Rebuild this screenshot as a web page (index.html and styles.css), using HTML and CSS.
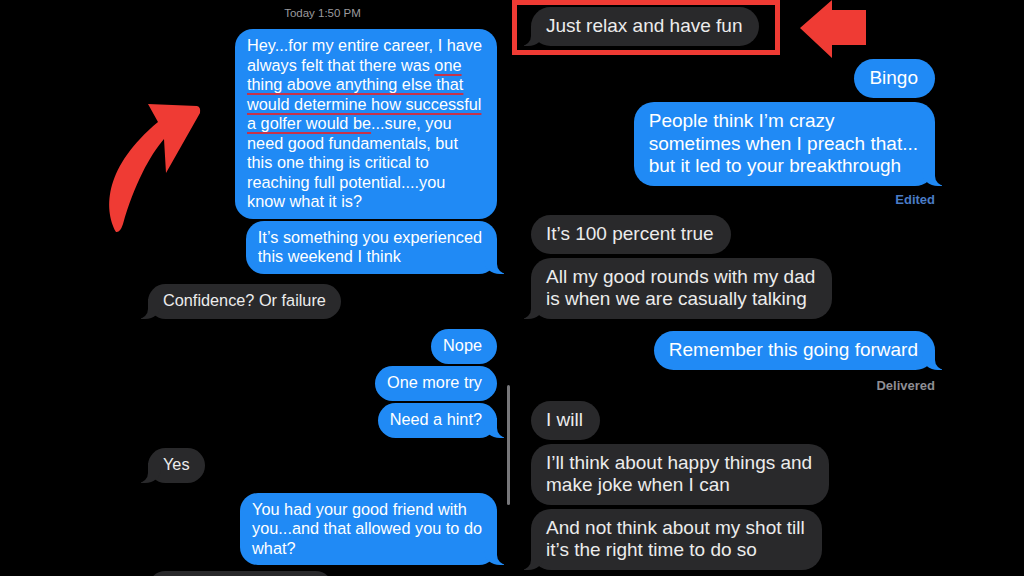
FILE: index.html
```html
<!DOCTYPE HTML>
<html lang="en">
<head>
    <meta charset="UTF-8">
    <meta name="viewport" content="width=device-width, initial-scale=1.0">
    <title>Messages</title>
    <link rel="stylesheet" href="styles.css">
</head>
<body>

    <div class="chat">
        <div class="col col-left">
            <div class="stamp">Today 1:50 PM</div>
            <div class="bubble sent">Hey...for my entire career, I have<br>always felt that there was <span class="mark">one</span><br><span class="mark">thing above anything else that</span><br><span class="mark">would determine how successful</span><br><span class="mark">a golfer would be</span>...sure, you<br>need good fundamentals, but<br>this one thing is critical to<br>reaching full potential....you<br>know what it is?</div>
            <div class="bubble sent tail close">It’s something you experienced<br>this weekend I think</div>
            <div class="bubble received tail apart">Confidence? Or failure</div>
            <div class="bubble sent apart">Nope</div>
            <div class="bubble sent close">One more try</div>
            <div class="bubble sent tail close">Need a hint?</div>
            <div class="bubble received tail apart">Yes</div>
            <div class="bubble sent tail apart">You had your good friend with<br>you...and that allowed you to do<br>what?</div>
            <div class="bubble received cut"></div>
        </div>

        <div class="scrollbar"></div>

        <div class="col col-right">
            <div class="top-row">
                <div class="highlight">
                    <div class="bubble received tail">Just relax and have fun</div>
                </div>
                <svg class="arrow-left" width="66" height="58" viewBox="0 0 66 58">
                    <polygon points="0,28 32,0 32,10 66,10 66,45 32,45 32,58" fill="#ef3b34"/>
                </svg>
            </div>
            <div class="bubble sent close">Bingo</div>
            <div class="bubble sent tail close">People think I’m crazy<br>sometimes when I preach that...<br>but it led to your breakthrough</div>
            <div class="status edited">Edited</div>
            <div class="bubble received after-status">It’s 100 percent true</div>
            <div class="bubble received tail close">All my good rounds with my dad<br>is when we are casually talking</div>
            <div class="bubble sent tail apart">Remember this going forward</div>
            <div class="status delivered">Delivered</div>
            <div class="bubble received after-status">I will</div>
            <div class="bubble received close">I’ll think about happy things and<br>make joke when I can</div>
            <div class="bubble received tail close">And not think about my shot till<br>it’s the right time to do so</div>
        </div>
    </div>

    <!-- curved arrow pointing at the first message -->
    <svg class="arrow-curve" width="105" height="135" viewBox="0 0 105 135">
        <path d="M16,132 C3,108 5,66 58,22 L48,4 L97,6 Q101,7 100,13 L66,73 L64,39 C50,55 34,85 23,124 Q20,133 16,132 Z" fill="#ef3b34"/>
    </svg>

</body>
</html>
```

FILE: styles.css
```css
body {
    margin: 0;
    height: 576px;
    overflow: hidden;
    position: relative;
    background-color: #000;
    color: #fff;
    font-family: "Liberation Sans", Arial, sans-serif;
}
.chat {
    display: flex;
    align-items: flex-start;
    padding-left: 148px;
}
.col {
    display: flex;
    flex-direction: column;
}
.col-left {
    width: 349px;
    font-size: 16.3px;
    line-height: 19.5px;
}
.col-right {
    width: 404px;
    font-size: 19px;
    line-height: 22.5px;
}
.stamp {
    align-self: center;
    padding: 6px 0 9px;
    font-size: 11.5px;
    line-height: 14px;
    color: #9a9a9e;
}
.scrollbar {
    flex: none;
    width: 3px;
    height: 120px;
    margin: 385px 21px 0 10px;
    background-color: #77777a;
    border-radius: 2px;
}

/* bubbles */
.bubble {
    position: relative;
    box-sizing: border-box;
    border-radius: 18px;
    white-space: nowrap;
}
.col-left .bubble {
    padding: 7px 15px 7px 12px;
    min-height: 35px;
}
.col-right .bubble {
    padding: 8px 17px 8px 15px;
    min-height: 39px;
    border-radius: 20px;
}
.col-left .received {
    padding-left: 15px;
}
.sent {
    align-self: flex-end;
    background-color: #208af5;
}
.received {
    align-self: flex-start;
    background-color: #29292b;
    color: #ececec;
}
.col-left .close { margin-top: 2px; }
.col-left .apart { margin-top: 10px; }
.col-right .close { margin-top: 4px; }
.col-right .apart { margin-top: 12px; }
.after-status { margin-top: 7px; }
.col-left .cut {
    width: 185px;
    margin-top: 6px;
}

/* tails */
.tail::before,
.tail::after {
    content: "";
    position: absolute;
    bottom: 0;
    height: 20px;
}
.sent.tail::before {
    right: -7px;
    width: 20px;
    background-color: #208af5;
    border-bottom-left-radius: 16px 14px;
}
.sent.tail::after {
    right: -10px;
    width: 10px;
    background-color: #000;
    border-bottom-left-radius: 10px;
}
.received.tail::before {
    left: -7px;
    width: 20px;
    background-color: #29292b;
    border-bottom-right-radius: 16px 14px;
}
.received.tail::after {
    left: -10px;
    width: 10px;
    background-color: #000;
    border-bottom-right-radius: 10px;
}

.mark {
    text-decoration: underline;
    text-decoration-color: #c8334a;
    text-decoration-thickness: 2px;
    text-underline-offset: 3px;
}

.status {
    align-self: flex-end;
    font-size: 13px;
    font-weight: bold;
    line-height: 16px;
}
.edited {
    margin-top: 6px;
    color: #4a7cc6;
}
.delivered {
    margin-top: 8px;
    color: #8e8e93;
}

/* annotations */
.top-row {
    display: flex;
    align-items: flex-start;
    gap: 20px;
    height: 55px;
    margin-left: -19px;
}
.highlight {
    display: flex;
    align-items: flex-start;
    box-sizing: border-box;
    width: 268px;
    height: 55px;
    padding: 2px 0 0 14px;
    border: 5px solid #ef3b34;
}
.arrow-left {
    flex: none;
}
.arrow-curve {
    position: absolute;
    left: 100px;
    top: 100px;
}
```
